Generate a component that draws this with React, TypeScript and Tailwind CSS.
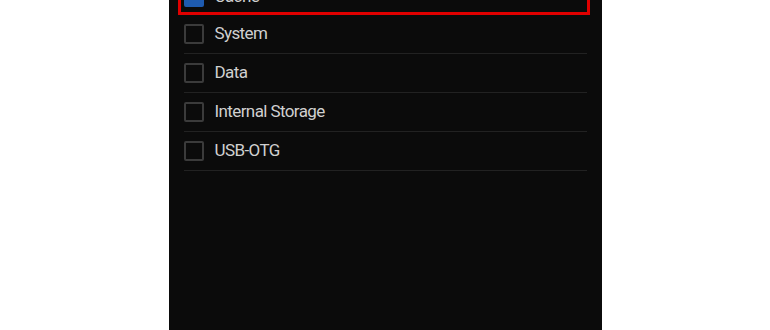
const ITEMS = ["System", "Data", "Internal Storage", "USB-OTG"];

function Box({ checked }: { checked?: boolean }) {
  return (
    <span
      className={`shrink-0 w-5 h-5 rounded-[2px] border-2 ${
        checked ? "border-[#1e5bb0] bg-[#1e5bb0]" : "border-[#3b3b3b]"
      }`}
    />
  );
}

export default function App() {
  return (
    <div className="w-[770px] h-[330px] bg-white flex justify-center overflow-hidden">
      <div className="w-[433px] h-full bg-[#0b0b0b] pl-[15px] pr-[15px] font-['Roboto',sans-serif]">
        {/* selected item, outlined in red */}
        <div className="mt-[-22px] ml-[-6px] mr-[-3px] h-[37px] border-[3px] border-[#e00000] pl-[3px] flex items-center gap-[11px]">
          <Box checked />
          <span className="text-[17px] text-[#d0d0d0] tracking-[-0.6px]">Cache</span>
        </div>
        {ITEMS.map((item) => (
          <div
            key={item}
            className="h-[39px] border-b border-[#222222] flex items-center gap-[11px]"
          >
            <Box />
            <span className="text-[17px] text-[#d0d0d0] tracking-[-0.6px]">{item}</span>
          </div>
        ))}
      </div>
    </div>
  );
}
